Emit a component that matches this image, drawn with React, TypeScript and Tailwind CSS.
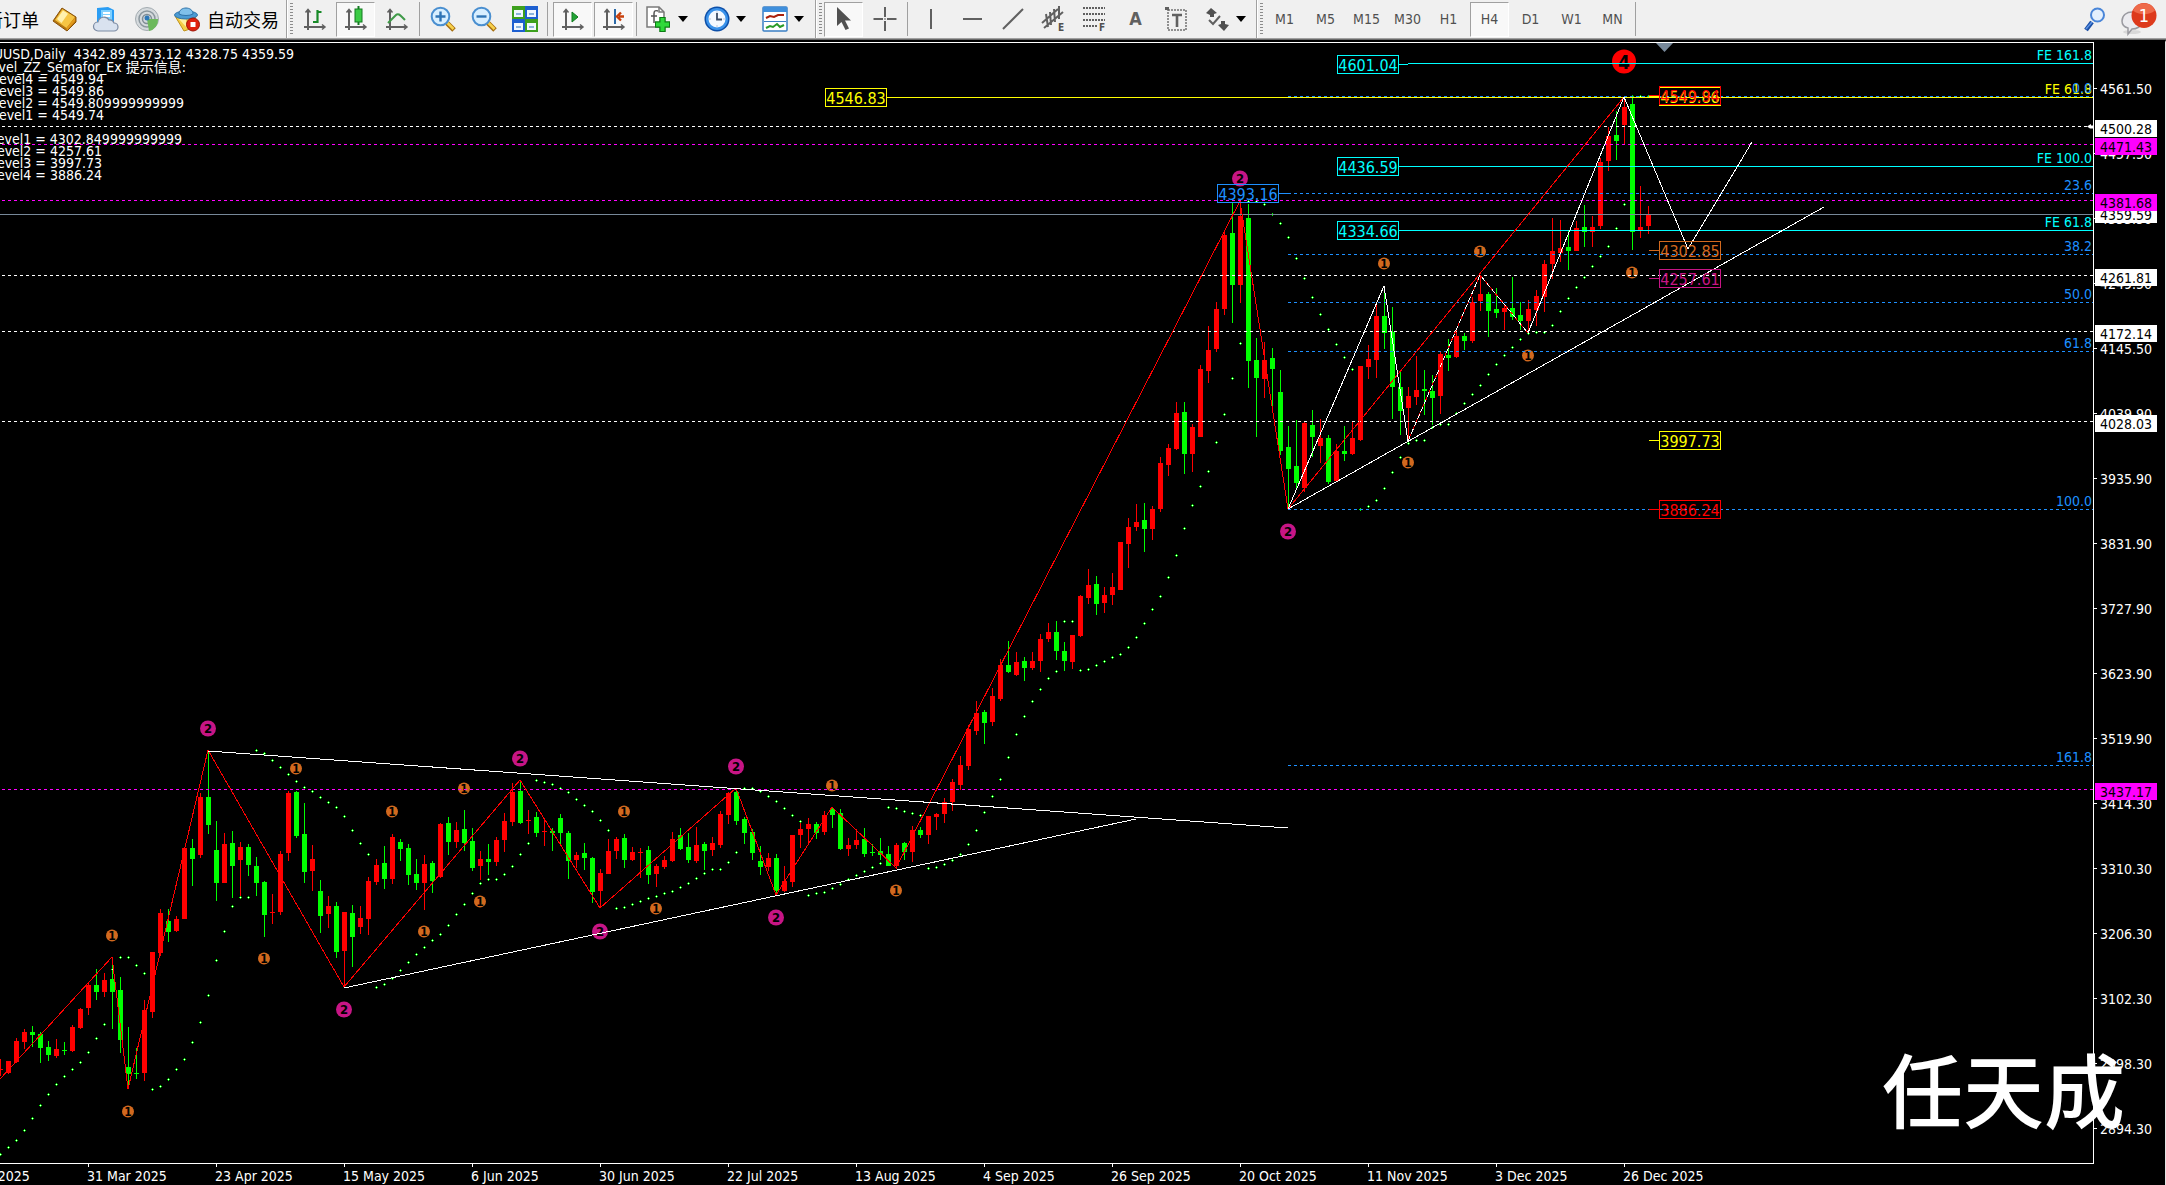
import React from 'react';

type Bar = ['R' | 'G', number, number, number, number];

interface Segment {
    start: number;
    top: number;
    bars: Bar[];
}

interface DotRun {
    start: number;
    top: number;
    ys: number[];
}

// Horizontal distance between two bars, and vertical units per pixel
const STEP = 8;
const UNIT = 3;
// The plot's own origin sits under the toolbar
const PLOT_TOP = 43;

// [colour, high, body top, body bottom, low]
const SEGMENTS: Segment[] = [
    {
        start: 0,
        top: 700,
        bars: [
            ['R', 1077, 1107, 1110, 1127], ['R', 1083, 1083, 1119, 1122], ['R', 1014, 1023, 1086, 1089], ['R', 987, 996, 1026, 1047],
            ['G', 978, 996, 1005, 1041], ['G', 996, 1002, 1044, 1089], ['G', 1023, 1041, 1065, 1083], ['R', 1017, 1047, 1068, 1074],
            ['G', 1026, 1050, 1053, 1065], ['R', 975, 981, 1053, 1056], ['R', 924, 927, 984, 987], ['R', 846, 855, 924, 945],
            ['G', 807, 855, 876, 900], ['R', 819, 840, 876, 891], ['G', 786, 837, 876, 987], ['G', 831, 870, 1020, 1059],
            ['G', 981, 1101, 1122, 1155], ['G', 1044, 1119, 1122, 1137], ['R', 900, 930, 1119, 1143], ['R', 756, 756, 936, 954],
            ['R', 627, 639, 759, 768], ['G', 627, 663, 696, 726], ['R', 648, 657, 693, 696], ['R', 444, 444, 657, 657],
            ['G', 417, 444, 477, 558], ['R', 279, 291, 465, 474], ['G', 153, 291, 375, 402], ['G', 363, 450, 549, 603],
            ['R', 399, 432, 549, 549], ['G', 393, 429, 498, 594], ['R', 426, 441, 480, 588], ['G', 432, 441, 495, 528],
            ['G', 471, 498, 549, 588], ['G', 543, 546, 645, 711], ['R', 582, 636, 639, 672], ['R', 453, 462, 636, 645],
            ['R', 273, 279, 459, 483], ['G', 273, 276, 408, 414], ['G', 309, 402, 516, 549], ['R', 435, 477, 513, 573],
            ['G', 540, 573, 648, 699], ['R', 588, 618, 642, 684], ['G', 606, 618, 756, 774], ['R', 636, 636, 753, 861],
            ['G', 615, 639, 711, 801], ['R', 618, 654, 681, 702], ['R', 531, 543, 657, 705], ['R', 477, 495, 546, 555],
            ['G', 438, 489, 537, 567], ['R', 402, 411, 537, 552], ['G', 417, 426, 447, 483], ['G', 432, 444, 525, 555],
            ['G', 477, 522, 549, 570], ['R', 465, 492, 549, 630], ['G', 483, 489, 543, 579], ['R', 369, 372, 531, 534],
            ['G', 351, 369, 426, 465], ['R', 366, 390, 426, 444], ['G', 330, 387, 429, 453], ['G', 384, 423, 504, 513],
            ['R', 453, 477, 498, 540], ['G', 432, 477, 486, 525], ['R', 411, 420, 486, 498], ['R', 339, 363, 420, 456],
            ['R', 249, 276, 366, 378], ['G', 243, 273, 369, 372], ['R', 330, 360, 363, 402], ['G', 336, 351, 399, 411],
            ['R', 354, 393, 396, 438], ['G', 384, 393, 399, 453], ['G', 342, 354, 399, 438], ['G', 393, 399, 483, 537],
            ['R', 456, 465, 480, 504], ['G', 429, 459, 474, 510], ['G', 471, 474, 576, 609], ['R', 507, 519, 573, 624],
            ['R', 417, 453, 522, 522], ['R', 411, 417, 453, 477], ['G', 402, 414, 480, 504], ['R', 441, 456, 480, 483],
            ['R', 444, 456, 459, 534], ['G', 438, 450, 525, 552], ['R', 492, 498, 522, 561], ['R', 468, 480, 501, 507],
            ['R', 396, 417, 483, 486], ['G', 384, 405, 447, 450], ['G', 399, 441, 480, 489], ['R', 381, 435, 483, 489],
            ['G', 426, 432, 453, 510], ['R', 411, 429, 450, 468], ['R', 333, 342, 435, 444], ['R', 276, 279, 345, 372],
            ['G', 267, 276, 363, 375], ['G', 351, 357, 399, 432], ['G', 387, 396, 459, 480], ['G', 438, 483, 501, 525],
            ['R', 459, 474, 501, 513], ['G', 462, 474, 573, 585], ['R', 498, 543, 573, 576], ['R', 405, 405, 546, 561],
            ['R', 363, 387, 405, 444], ['R', 354, 372, 387, 435], ['G', 366, 372, 399, 417], ['R', 333, 345, 396, 405],
            ['G', 321, 327, 345, 384], ['G', 327, 339, 447, 450], ['R', 414, 435, 447, 468], ['R', 387, 420, 435, 447],
            ['G', 384, 417, 462, 471], ['G', 432, 456, 459, 468], ['G', 414, 453, 465, 480], ['G', 438, 462, 498, 498],
        ],
    },
    {
        start: 112,
        top: 560,
        bars: [
            ['R', 849, 855, 918, 927], ['G', 846, 849, 876, 900], ['R', 798, 810, 876, 906], ['G', 801, 810, 825, 834],
            ['R', 768, 768, 825, 852], ['R', 759, 762, 771, 810], ['R', 714, 726, 762, 789], ['R', 657, 666, 726, 753],
            ['R', 588, 615, 675, 690], ['R', 495, 507, 618, 630], ['R', 423, 459, 513, 525], ['G', 450, 456, 489, 552],
            ['R', 384, 408, 486, 498], ['R', 297, 315, 417, 423], ['G', 243, 315, 336, 339], ['R', 276, 306, 345, 348],
            ['G', 291, 303, 324, 363], ['R', 276, 303, 324, 330], ['R', 222, 237, 303, 336], ['R', 189, 216, 237, 246],
            ['G', 183, 216, 273, 300], ['G', 246, 273, 303, 333], ['R', 225, 225, 306, 327], ['R', 105, 108, 228, 231],
            ['R', 27, 75, 114, 132], ['G', 48, 72, 132, 165], ['R', 81, 105, 129, 159], ['R', 39, 81, 105, 135],
        ],
    },
    {
        start: 140,
        top: 180,
        bars: [
            ['R', 1086, 1086, 1230, 1230], ['R', 1014, 1041, 1092, 1164], ['R', 972, 1026, 1041, 1053], ['G', 969, 1020, 1047, 1116],
            ['R', 978, 987, 1047, 1080], ['R', 831, 849, 987, 996], ['R', 792, 804, 855, 888], ['R', 666, 699, 807, 810],
            ['G', 666, 696, 822, 882], ['R', 732, 741, 822, 876], ['R', 555, 567, 771, 771], ['R', 438, 510, 573, 609],
            ['R', 366, 387, 507, 516], ['R', 156, 165, 387, 405], ['G', 69, 159, 315, 429], ['R', 66, 108, 315, 369],
            ['G', 72, 114, 543, 624], ['G', 474, 540, 594, 771],
        ],
    },
    {
        start: 158,
        top: 40,
        bars: [
            ['R', 906, 960, 1018, 1074], ['G', 924, 954, 987, 1116], ['G', 990, 1056, 1233, 1245], ['G', 1158, 1221, 1287, 1407],
            ['G', 1140, 1278, 1329, 1350], ['R', 1146, 1149, 1344, 1356], ['G', 1110, 1155, 1191, 1251], ['R', 1137, 1194, 1218, 1269],
            ['G', 1185, 1194, 1326, 1332], ['R', 1212, 1233, 1323, 1326], ['G', 1158, 1233, 1242, 1263], ['R', 1146, 1194, 1242, 1245],
            ['R', 978, 978, 1200, 1203], ['R', 915, 957, 981, 1017], ['R', 795, 828, 960, 1014], ['G', 742, 828, 879, 927],
            ['G', 801, 876, 1041, 1137], ['G', 996, 1041, 1113, 1185], ['R', 1041, 1068, 1104, 1197], ['R', 948, 1050, 1071, 1095],
            ['G', 990, 1047, 1053, 1125], ['G', 1005, 1053, 1074, 1155], ['R', 936, 942, 1068, 1122], ['G', 897, 945, 954, 993],
            ['R', 870, 888, 951, 954], ['G', 879, 888, 903, 930], ['R', 771, 786, 903, 909], ['R', 705, 762, 783, 813],
            ['G', 756, 762, 813, 891], ['G', 744, 807, 819, 834], ['R', 792, 804, 816, 870], ['G', 711, 804, 831, 840],
            ['G', 786, 825, 843, 870], ['R', 780, 807, 843, 870], ['R', 750, 768, 810, 858], ['R', 660, 672, 771, 816],
            ['R', 534, 633, 672, 717], ['R', 540, 624, 639, 666], ['G', 573, 621, 633, 690], ['R', 543, 564, 633, 633],
            ['G', 495, 561, 576, 621], ['R', 528, 561, 576, 621], ['R', 354, 366, 558, 567], ['R', 261, 288, 363, 393],
            ['G', 213, 285, 303, 360], ['R', 171, 201, 255, 315], ['G', 165, 192, 576, 630], ['R', 438, 561, 570, 594],
            ['R', 498, 522, 558, 582],
        ],
    },
];

// Parabolic SAR
const SAR: DotRun[] = [
    {
        start: 0,
        top: 700,
        ys: [
            1363, 1342, 1321, 1291, 1255, 1216, 1183, 1153, 1129, 1108, 1087, 1057, 1015, 973, 808,
            772, 772, 796, 820,
            1168, 1159, 1138, 1108, 1078, 1027, 967, 886, 781, 694, 619, 592, 592,
            151, 160, 181, 202, 223, 244, 262, 274, 292, 307, 322, 349, 391, 430, 463,
            862, 853, 835, 811, 787, 763, 742, 721, 703, 676, 643, 613, 580, 550, 538, 538, 523, 499, 463, 430,
            241, 247, 253, 265, 277, 298, 316, 334, 361, 391,
            625, 622, 613, 604, 595, 589, 580, 574, 562, 550, 535, 520, 508, 508, 487, 457,
            265, 265, 274, 289, 304, 325, 346, 364,
            586, 580, 577, 565, 553, 538, 526, 514, 502, 490,
            322, 325, 334, 340, 346,
        ],
    },
    {
        start: 116,
        top: 560,
        ys: [
            925, 922, 913, 901, 883, 853, 811, 757, 709, 658, 592, 523, 469, 424, 388, 355, 334,
            184, 184,
            331, 328, 316, 304, 292, 283, 262, 232, 190, 148, 109, 52,
        ],
    },
    { start: 147, top: 180, ys: [1126, 1045, 976, 919, 874, 787, 703, 595, 490] },
    {
        start: 156,
        top: 40,
        ys: [
            484, 484, 493, 523, 550, 592, 655, 715, 772, 823, 868, 913, 952, 988,
            1408, 1399, 1381, 1345, 1297, 1252,
            1210, 1201, 1201, 1162, 1153, 1153, 1120, 1090, 1063, 1036, 1003, 973, 946, 922, 898, 880, 877, 877,
            856, 814, 775, 742, 712, 679, 649, 619, 565, 493,
            169, 169, 169,
        ],
    },
];

const DASHED_LEVELS = [
    { y: 126, color: '#ffffff' },
    { y: 144, color: '#ff00ff' },
    { y: 200, color: '#ff00ff' },
    { y: 275, color: '#ffffff' },
    { y: 331, color: '#ffffff' },
    { y: 421, color: '#ffffff' },
    { y: 789, color: '#ff00ff' },
];

const FIBO = [
    { y: 96, label: '0.0' },
    { y: 193, label: '23.6' },
    { y: 254, label: '38.2' },
    { y: 302, label: '50.0' },
    { y: 351, label: '61.8' },
    { y: 509, label: '100.0' },
    { y: 765, label: '161.8' },
];

const EXPANSION = [
    { x: 1408, y: 63, label: 'FE 161.8', color: '#00ffff' },
    { x: 1398, y: 166, label: 'FE 100.0', color: '#00ffff' },
    { x: 1398, y: 230, label: 'FE 61.8', color: '#00ffff' },
    { x: 887, y: 97, label: 'FE 61.8', color: '#ffff00' },
];

const PRICE_BOXES = [
    { x: 825, y: 88, text: '4546.83', color: '#ffff00', side: 'none' },
    { x: 1337, y: 55, text: '4601.04', color: '#00ffff', side: 'right' },
    { x: 1337, y: 157, text: '4436.59', color: '#00ffff', side: 'none' },
    { x: 1337, y: 221, text: '4334.66', color: '#00ffff', side: 'none' },
    { x: 1217, y: 184, text: '4393.16', color: '#1e90ff', side: 'right' },
    { x: 1659, y: 87, text: '4549.86', color: '#ffff00', side: 'left' },
    { x: 1659, y: 86, text: '4549.94', color: '#ff0000', side: 'left' },
    { x: 1659, y: 241, text: '4302.85', color: '#d2691e', side: 'left' },
    { x: 1659, y: 269, text: '4257.61', color: '#c71585', side: 'left' },
    { x: 1659, y: 431, text: '3997.73', color: '#ffff00', side: 'left' },
    { x: 1659, y: 500, text: '3886.24', color: '#ff0000', side: 'left' },
];

const MARKERS: { level: 1 | 2 | 4; points: [number, number][] }[] = [
    {
        level: 1,
        points: [
            [112, 935], [128, 1111], [264, 958], [296, 768], [392, 811], [424, 931], [464, 788], [480, 901], [624, 811],
            [656, 908], [832, 785], [896, 890], [1384, 263], [1480, 251], [1528, 355], [1408, 462], [1632, 272],
        ],
    },
    {
        level: 2,
        points: [[208, 728], [344, 1009], [520, 758], [736, 766], [600, 931], [776, 917], [1240, 178], [1288, 531]],
    },
    { level: 4, points: [[1624, 61]] },
];

const MARKER_STYLE = {
    1: { r: 6, fill: '#d2691e', size: 12 },
    2: { r: 8, fill: '#c71585', size: 13 },
    4: { r: 12, fill: '#ff0000', size: 19 },
};

const COMMENTS = [
    { x: 294, y: 59, text: 'XAUUSD,Daily  4342.89 4373.12 4328.75 4359.59' },
    { x: 186, y: 72, text: '3_Level_ZZ_Semafor_Ex 提示信息:' },
    { x: 104, y: 84, text: 'Level4 = 4549.94' },
    { x: 104, y: 96, text: 'Level3 = 4549.86' },
    { x: 184, y: 108, text: 'Level2 = 4549.809999999999' },
    { x: 104, y: 120, text: 'Level1 = 4549.74' },
    { x: 182, y: 144, text: 'Level1 = 4302.849999999999' },
    { x: 102, y: 156, text: 'Level2 = 4257.61' },
    { x: 102, y: 168, text: 'Level3 = 3997.73' },
    { x: 102, y: 180, text: 'Level4 = 3886.24' },
];

const PRICES = [
    '4561.50', '4457.50', '4353.50', '4249.50', '4145.50', '4039.90', '3935.90', '3831.90', '3727.90',
    '3623.90', '3519.90', '3414.30', '3310.30', '3206.30', '3102.30', '2998.30', '2894.30',
];

const PRICE_TAGS = [
    { top: 166, text: '4359.59', magenta: false },
    { top: 80, text: '4500.28', magenta: false },
    { top: 98, text: '4471.43', magenta: true },
    { top: 154, text: '4381.68', magenta: true },
    { top: 229, text: '4261.81', magenta: false },
    { top: 285, text: '4172.14', magenta: false },
    { top: 375, text: '4028.03', magenta: false },
    { top: 743, text: '3437.17', magenta: true },
];

const DATES = [
    '31 Mar 2025', '23 Apr 2025', '15 May 2025', '6 Jun 2025', '30 Jun 2025', '22 Jul 2025', '13 Aug 2025',
    '4 Sep 2025', '26 Sep 2025', '20 Oct 2025', '11 Nov 2025', '3 Dec 2025', '26 Dec 2025',
];

const TIMEFRAMES = ['M1', 'M5', 'M15', 'M30', 'H1', 'H4', 'D1', 'W1', 'MN'];

/* ---------- toolbar icons ---------- */

const Icon = ({ children }: { children: React.ReactNode }) => (
    <svg width="26" height="26" viewBox="0 0 26 26" fill="none" className="shrink-0 overflow-visible">
        {children}
    </svg>
);

const Axes = () => (
    <g stroke="#606060" strokeWidth="2">
        <path d="M6 4v20M2 21h20" />
        <path d="M3.500 6.500L6 3.500l2.500 3M20 18.500l3 2.500-3 2.500" strokeWidth="1.500" />
    </g>
);

const GoldIcon = () => (
    <Icon>
        <path d="M1 15L10 2l14 9v5L15 25z" fill="#b5760f" />
        <path d="M3 14L10.500 3 23 11 14.500 22z" fill="#f6c544" />
        <path d="M5 13L11 4.500l5 3.300L9.500 17z" fill="#fff0ae" />
        <path d="M14.500 22L23 11.500V15l-8 9.500z" fill="#e39a1c" />
        <path d="M1 15L10 2l14 9v5L15 25z" stroke="#8a5208" />
    </Icon>
);

const CloudIcon = () => (
    <Icon>
        <path d="M4 2l11-1 6 3v12H4z" fill="#2a9df4" />
        <path d="M8 4h11v12H8z" fill="#7fd0ff" />
        <path d="M10 7h7M10 10h7" stroke="#fff" strokeWidth="2" />
        <path d="M5 25a4.500 4.500 0 010-9 6 6 0 0111-2 4.500 4.500 0 015 3 4 4 0 010 8z" fill="#d9e2ef" stroke="#7c8ba3" strokeWidth="1.200" />
    </Icon>
);

const RadarIcon = () => (
    <Icon>
        <circle cx="13" cy="13" r="11.500" fill="#d5dadd" stroke="#a3abb0" />
        <circle cx="13" cy="13" r="8" stroke="#8b979e" strokeWidth="1.500" />
        <circle cx="13" cy="13" r="4.500" stroke="#7f8d96" strokeWidth="1.500" />
        <path d="M13 13l11 0a11 11 0 01-9 12z" fill="#6cb95c" />
        <circle cx="13" cy="12" r="2.500" fill="#2d78b8" />
    </Icon>
);

const ExpertIcon = () => (
    <Icon>
        <path d="M1 10h21l-6 13-6 2z" fill="#f5cf45" stroke="#c0921a" />
        <path d="M5 13h7l1 9z" fill="#fff0a0" />
        <ellipse cx="12" cy="9" rx="11.500" ry="4" fill="#4b9bd3" stroke="#2d72a8" />
        <path d="M5 8c0-8 14-8 14 0-3 2-11 2-14 0z" fill="#7fc0ea" stroke="#2d72a8" />
        <circle cx="19" cy="18.500" r="6.500" fill="#e0220d" stroke="#9e1507" />
        <rect x="16.500" y="16" width="5" height="5" fill="#fff" />
    </Icon>
);

const BarsIcon = () => (
    <Icon>
        <Axes />
        <path d="M15.500 4v13M15.500 6h4M11 16h4.500" stroke="#188a28" strokeWidth="2.200" />
    </Icon>
);

const CandlesIcon = () => (
    <Icon>
        <Axes />
        <path d="M15.500 0v19" stroke="#127a20" strokeWidth="2" />
        <rect x="12" y="3" width="7" height="13" fill="#3ccb46" stroke="#127a20" />
    </Icon>
);

const LineIcon = () => (
    <Icon>
        <Axes />
        <path d="M4 17l8-8c2-2 4 0 6 2l3 3" stroke="#3f9a48" strokeWidth="2" />
    </Icon>
);

const ZoomIcon = ({ plus }: { plus?: boolean }) => (
    <Icon>
        <path d="M17 17l7 7" stroke="#a87010" strokeWidth="5" />
        <path d="M17 16.500l6.500 6.500" stroke="#f8d24c" strokeWidth="2.500" />
        <circle cx="10.500" cy="10.500" r="8.800" fill="#d8efff" stroke="#4a8fd0" strokeWidth="2" />
        <path d={plus ? 'M10.500 5.500v10M5.500 10.500h10' : 'M5.500 10.500h10'} stroke="#2f74b5" strokeWidth="2.400" />
    </Icon>
);

const TilesIcon = () => (
    <Icon>
        <rect x="0" y="0" width="13" height="13" fill="#3da01e" />
        <rect x="13" y="0" width="13" height="13" fill="#1d5fd0" />
        <rect x="0" y="13" width="13" height="13" fill="#1d5fd0" />
        <rect x="13" y="13" width="13" height="13" fill="#3da01e" />
        <path d="M2 4h9v7H2zM15 4h9v7h-9zM2 17h9v7H2zM15 17h9v7h-9z" fill="#f2f8ff" />
        <path d="M4 8h5M17 8h5M4 21h5M17 21h5" stroke="#8cb4dc" strokeWidth="2" />
    </Icon>
);

const ScrollIcon = () => (
    <Icon>
        <Axes />
        <path d="M12 6v10l6-5z" fill="#22a535" stroke="#127a20" />
    </Icon>
);

const ShiftIcon = () => (
    <Icon>
        <Axes />
        <path d="M14 3v15" stroke="#2c6aa8" strokeWidth="2" />
        <path d="M23 10.500h-5M20 6.500l-4 4 4 4" stroke="#c8400c" strokeWidth="2.400" />
    </Icon>
);

const IndicatorIcon = () => (
    <Icon>
        <path d="M1 1h12l5 5v15H1z" fill="#fff" stroke="#7a7a7a" strokeWidth="1.500" />
        <path d="M13 1v5h5" stroke="#7a7a7a" strokeWidth="1.500" />
        <path d="M12 5c-3-1-4 0-4 3v9M5 10h6" stroke="#555" strokeWidth="1.500" />
        <path d="M16.500 11v15M9 18.500h15" stroke="#0c7d14" strokeWidth="6.500" />
        <path d="M16.500 12v13M10 18.500h13" stroke="#2fd93a" strokeWidth="4" />
    </Icon>
);

const ClockIcon = () => (
    <Icon>
        <circle cx="13" cy="13" r="12.500" fill="#0d4fa8" />
        <circle cx="13" cy="13" r="11" fill="#3a92ea" />
        <circle cx="13" cy="13" r="8.500" fill="#f4f9ff" />
        <path d="M13 7v6.500h5" stroke="#3c4d66" strokeWidth="1.800" />
        <path d="M13 5.500v1M13 19.500v1M5.500 13h1M19.500 13h1" stroke="#8a9bb0" />
    </Icon>
);

const TemplateIcon = () => (
    <Icon>
        <rect x="1" y="1" width="24" height="24" rx="1" fill="#fff" stroke="#3a7fc4" strokeWidth="1.500" />
        <rect x="1" y="1" width="24" height="5" fill="#3f8fdc" />
        <path d="M2 15.500h22" stroke="#3a7fc4" />
        <path d="M4 12l4-2 4 1 4-2h6" stroke="#a8200c" strokeWidth="2" />
        <path d="M4 22l4-2 3 1 4-3 3 3 4-2" stroke="#2a9a2a" strokeWidth="2" />
    </Icon>
);

const CursorIcon = () => (
    <Icon>
        <path d="M6 1v19l4.500-4 4 8 3.500-1.500-4-8h6z" fill="#505050" />
    </Icon>
);

const CrossIcon = () => (
    <Icon>
        <path d="M13 1v10M13 15v10M1.500 13h9.500M15 13h9.500M12.500 13h1" stroke="#606060" strokeWidth="2" />
    </Icon>
);

const ChannelIcon = () => (
    <Icon>
        <path d="M1 17L17 3M3 22L22 6M5 8l2 13M9 6l1 13M13 3l1 13M18 0v13" stroke="#606060" strokeWidth="2" />
        <text x="17" y="25" fontSize="10" fontWeight="700" fill="#505050">E</text>
    </Icon>
);

const FiboIcon = () => (
    <Icon>
        <path d="M1 2h22M1 8h22M1 14h22M1 20h14" stroke="#606060" strokeWidth="2" strokeDasharray="2 1" />
        <text x="17" y="25" fontSize="10" fontWeight="700" fill="#505050">F</text>
    </Icon>
);

const LabelIcon = () => (
    <Icon>
        <rect x="4" y="4" width="18" height="20" stroke="#707070" strokeWidth="1.500" strokeDasharray="2 1" />
        <path d="M8 9h10M13 9v12" stroke="#606060" strokeWidth="2.600" />
        <path d="M1 1h4v3H1z" fill="#606060" />
    </Icon>
);

const ArrowsIcon = () => (
    <Icon>
        <path d="M7 2l6 5-3 1v3H6V9L2 7zM20 25l-6-6 3-1v-3h4v3l4 1z" fill="#505050" />
        <path d="M5 14l4 4 7-8" stroke="#606060" strokeWidth="2" />
    </Icon>
);

const SearchIcon = () => (
    <Icon>
        <path d="M10 16l-6 8" stroke="#1b4fa6" strokeWidth="4.500" />
        <path d="M10 16l-6 7" stroke="#5b93e4" strokeWidth="1.500" />
        <circle cx="15.500" cy="9" r="6.500" fill="#e4f0fd" stroke="#4a86d8" strokeWidth="2" />
    </Icon>
);

const ChatIcon = () => (
    <svg width="38" height="36" viewBox="0 0 38 36" fill="none">
        <ellipse cx="12" cy="31" rx="9" ry="2" fill="#d8d8d8" />
        <path d="M2 20c0-12 20-12 20 0 0 6-6 8-10 8l-4 5v-6c-4-1-6-4-6-7z" fill="#ececf0" stroke="#9a9aa0" strokeWidth="1.500" />
        <circle cx="24" cy="14.500" r="12.500" fill="#dd3a1c" />
        <path d="M13 9.500a12 12 0 0122 0c-6 5-16 5-22 0z" fill="#ee6a4a" />
        <text x="24" y="21" fontSize="18" fill="#fff" textAnchor="middle">1</text>
    </svg>
);

/* ---------- toolbar parts ---------- */

const ToolButton = ({ label, pressed, children }: { label: string; pressed?: boolean; children: React.ReactNode }) => (
    <button
        type="button"
        aria-label={label}
        aria-pressed={pressed}
        className={
            pressed
                ? 'flex h-[35px] w-[39px] shrink-0 items-center justify-center border border-[#a0a0a0] border-r-white border-b-white bg-[#f8f8f8]'
                : 'flex h-[35px] w-[39px] shrink-0 items-center justify-center'
        }
    >
        {children}
    </button>
);

const Caret = () => (
    <svg width="10" height="6" viewBox="0 0 10 6" className="shrink-0">
        <path d="M0 0h10L5 6z" fill="#000" />
    </svg>
);

const DropButton = ({ label, children }: { label: string; children: React.ReactNode }) => (
    <button type="button" aria-label={label} className="flex h-[35px] w-14 shrink-0 items-center pl-[6px]">
        {children}
        <span className="pl-[6px]">
            <Caret />
        </span>
    </button>
);

const Separator = () => <span className="mx-[3px] h-[34px] w-px shrink-0 bg-[#a0a0a0]" />;

const Gripper = () => (
    <>
        <span className="h-[38px] w-[2px] shrink-0 border-l border-[#a0a0a0] bg-white" />
        <span className="mx-[2px] h-[32px] w-[3px] shrink-0 bg-[repeating-linear-gradient(to_bottom,#8c8c8c_0_1px,#f0f0f0_1px_3px)]" />
    </>
);

const Toolbar = () => (
    <header className="flex h-10 shrink-0 items-center overflow-hidden border-b border-[#696969] bg-[#f0f0f0] pb-px shadow-[inset_0_-1px_0_#a0a0a0]">
        <button type="button" className="-ml-[15px] mr-[6px] shrink-0 font-['Noto_Sans_CJK_SC',sans-serif] text-[18px] leading-6 text-black">
            新订单
        </button>
        <div className="flex shrink-0 gap-[2px]">
            <ToolButton label="MetaEditor"><GoldIcon /></ToolButton>
            <ToolButton label="VPS"><CloudIcon /></ToolButton>
            <ToolButton label="Signals"><RadarIcon /></ToolButton>
            <button type="button" className="mr-[7px] flex h-[35px] shrink-0 items-center gap-[7px] pl-[6px] font-['Noto_Sans_CJK_SC',sans-serif] text-[18px] leading-6 text-black">
                <ExpertIcon />
                自动交易
            </button>
        </div>
        <Gripper />
        <div className="flex shrink-0 gap-[2px]">
            <ToolButton label="Bar chart"><BarsIcon /></ToolButton>
            <ToolButton label="Candlesticks" pressed><CandlesIcon /></ToolButton>
            <ToolButton label="Line chart"><LineIcon /></ToolButton>
        </div>
        <Separator />
        <div className="flex shrink-0 gap-[2px]">
            <ToolButton label="Zoom in"><ZoomIcon plus /></ToolButton>
            <ToolButton label="Zoom out"><ZoomIcon /></ToolButton>
            <ToolButton label="Tile windows"><TilesIcon /></ToolButton>
        </div>
        <Separator />
        <div className="flex shrink-0 gap-[2px] pl-[2px]">
            <ToolButton label="Auto scroll" pressed><ScrollIcon /></ToolButton>
            <ToolButton label="Chart shift" pressed><ShiftIcon /></ToolButton>
        </div>
        <Separator />
        <div className="mr-[3px] flex shrink-0 gap-[2px]">
            <DropButton label="Indicators"><IndicatorIcon /></DropButton>
            <DropButton label="Periods"><ClockIcon /></DropButton>
            <DropButton label="Templates"><TemplateIcon /></DropButton>
        </div>
        <Gripper />
        <div className="flex shrink-0 gap-[2px]">
            <ToolButton label="Cursor" pressed><CursorIcon /></ToolButton>
            <ToolButton label="Crosshair"><CrossIcon /></ToolButton>
        </div>
        <Separator />
        <div className="mr-[2px] flex shrink-0 gap-[2px]">
            <ToolButton label="Vertical line"><Icon><path d="M13 3v20" stroke="#606060" strokeWidth="2" /></Icon></ToolButton>
            <ToolButton label="Horizontal line"><Icon><path d="M4 13h19" stroke="#606060" strokeWidth="2" /></Icon></ToolButton>
            <ToolButton label="Trendline"><Icon><path d="M3 23L23 3" stroke="#606060" strokeWidth="2" /></Icon></ToolButton>
            <ToolButton label="Channel"><ChannelIcon /></ToolButton>
            <ToolButton label="Fibonacci"><FiboIcon /></ToolButton>
            <ToolButton label="Text">
                <span className="text-lg leading-6 font-bold text-[#606060]">A</span>
            </ToolButton>
            <ToolButton label="Text label"><LabelIcon /></ToolButton>
            <DropButton label="Arrows"><ArrowsIcon /></DropButton>
        </div>
        <Gripper />
        <div className="flex shrink-0 gap-[2px]">
            {TIMEFRAMES.map((tf) => (
                <ToolButton key={tf} label={tf} pressed={tf === 'H4'}>
                    <span className="text-sm leading-5 text-[#505050]">{tf}</span>
                </ToolButton>
            ))}
        </div>
        <Separator />
        <div className="ml-auto flex shrink-0 items-center gap-[6px] pr-[8px]">
            <ToolButton label="Search"><SearchIcon /></ToolButton>
            <button type="button" aria-label="Notifications"><ChatIcon /></button>
        </div>
    </header>
);

/* ---------- chart ---------- */

const Candle = ({ index, top, bar }: { index: number; top: number; bar: Bar }) => {
    const [kind, ...values] = bar;
    const [high, open, close, low] = values.map((v) => top + Math.round(v / UNIT));
    const x = index * STEP;
    return (
        <g fill={kind === 'R' ? '#ff0000' : '#00ff00'}>
            <rect x={x} y={high} width="1" height={Math.max(low - high, 1)} />
            <rect x={x - 2} y={open} width="5" height={Math.max(close - open, 1)} />
        </g>
    );
};

const SarDot = ({ index, y }: { index: number; y: number }) => (
    <>
        <path d={`M${index * STEP - 1} ${y}h3v1h-3zM${index * STEP} ${y - 1}h1v3h-1z`} fill="#00ff00" />
        <rect x={index * STEP} y={y} width="1" height="1" fill="#ffffff" />
    </>
);

const Plot = () => (
    <svg width="100%" height="100%" className="block" role="img" aria-label="XAUUSD, Daily">
        <g transform={`translate(0 ${-PLOT_TOP})`}>
            <g shapeRendering="crispEdges">
                {SEGMENTS.map((seg) =>
                    seg.bars.map((bar, i) => <Candle key={seg.start + i} index={seg.start + i} top={seg.top} bar={bar} />)
                )}
                {SAR.map((run) =>
                    run.ys.map((v, i) => <SarDot key={run.start + i} index={run.start + i} y={run.top + Math.floor(v / UNIT)} />)
                )}
            </g>

            {/* Semaphore markers */}
            {MARKERS.map(({ level, points }) => {
                const { r, fill, size } = MARKER_STYLE[level];
                return points.map(([x, y]) => (
                    <g key={`${x}-${y}`}>
                        <circle cx={x} cy={y + 0.5} r={r} fill={fill} />
                        <text x={x} y={y + size * 0.4} fontSize={size} fontWeight="700" textAnchor="middle" fill="#000">{level}</text>
                    </g>
                ));
            })}

            {/* Levels and trend lines */}
            <g shapeRendering="crispEdges" fill="none">
                {DASHED_LEVELS.map((l) => (
                    <line key={l.y} x1="2" x2="100%" y1={l.y + 0.5} y2={l.y + 0.5} stroke={l.color} strokeDasharray="3 3" />
                ))}
                <line x1="0" x2="100%" y1="214.500" y2="214.500" stroke="#778899" />
                {EXPANSION.map((l) => (
                    <line key={l.y} x1={l.x} x2="100%" y1={l.y + 0.5} y2={l.y + 0.5} stroke={l.color} />
                ))}
                {FIBO.map((l) => (
                    <line key={l.y} x1="1288" x2="100%" y1={l.y + 0.5} y2={l.y + 0.5} stroke="#1e90ff" strokeDasharray="3 3" />
                ))}
                <polyline
                    points="0,1079 112,957 128,1089 208,750 344,987 520,780 600,908 736,788 776,895 832,807 896,868 1240,201 1288,509 1624,97"
                    stroke="#ff0000"
                />
                <polyline points="1408,441 1480,275 1528,333" stroke="#ff0000" />
                <polyline points="1408,441 1480,275 1528,333" stroke="#ffffff" strokeDasharray="5 3" />
                <polyline points="1288,509 1384,286 1408,441" stroke="#ffffff" />
                <polyline points="1528,333 1624,97 1688,249 1752,142" stroke="#ffffff" />
                <line x1="1288" y1="509" x2="1824" y2="207" stroke="#ffffff" />
                <line x1="208" y1="751" x2="1288" y2="828" stroke="#ffffff" />
                <line x1="344" y1="988" x2="1136" y2="819" stroke="#ffffff" />
            </g>

            <path d="M1656 43h17l-8.500 9z" fill="#778899" />

            {/* Price boxes */}
            {PRICE_BOXES.map((b) => (
                <g key={b.text}>
                    <rect x={b.x + 0.5} y={b.y + 0.5} width="61" height="18" fill="none" stroke={b.color} />
                    {b.side === 'left' && <path d={`M${b.x - 10} ${b.y + 9.5}h10`} stroke={b.color} />}
                    {b.side === 'right' && <path d={`M${b.x + 61} ${b.y + 9.5}h10`} stroke={b.color} />}
                    <text x={b.x + 31} y={b.y + 16} fontSize="16" textAnchor="middle" fill={b.color}>{b.text}</text>
                </g>
            ))}

            <g fontSize="14" textAnchor="end">
                {EXPANSION.map((l) => (
                    <text key={l.y} x="100%" dx="-1" y={l.y - 3} fill={l.color}>{l.label}</text>
                ))}
                {FIBO.map((l) => (
                    <text key={l.y} x="100%" dx="-1" y={l.y - 3} fill="#1e90ff">{l.label}</text>
                ))}
                {COMMENTS.map((c) => (
                    <text key={c.y} x={c.x} y={c.y} fill="#ffffff" className="whitespace-pre">{c.text}</text>
                ))}
            </g>

            {/* Alert arrow at the right edge */}
            <svg x="100%" y="124" width="6" height="6" overflow="visible">
                <path d="M-6 2.500L-2 0v1.500h2v3h-2l-1 0z" fill="#ffffff" />
            </svg>
        </g>
    </svg>
);

const TimeAxis = () => (
    <div className="flex h-[21px] shrink-0 overflow-hidden text-sm leading-[18px] text-white">
        <span className="-ml-[42px] w-[129px] shrink-0 pt-[3px] whitespace-nowrap">7 Mar 2025</span>
        {DATES.map((date) => (
            <div key={date} className="w-32 shrink-0">
                <div className="ml-px h-[3px] w-px bg-white" />
                <span className="block whitespace-nowrap">{date}</span>
            </div>
        ))}
    </div>
);

const PriceAxis = () => (
    <aside className="relative w-[71px] shrink-0 overflow-hidden pt-[14px] text-sm leading-[19px]">
        {PRICES.map((price) => (
            <div key={price} className="flex h-[65px] items-center gap-[3px] text-white">
                <span className="h-px w-[3px] bg-white" />
                <span className="pt-[2px]">{price}</span>
            </div>
        ))}
        {PRICE_TAGS.map((tag) => (
            <span
                key={tag.text}
                style={{ top: tag.top - 2 }}
                className={
                    tag.magenta
                        ? 'absolute left-px h-[17px] w-[62px] bg-[#ff00ff] pl-[5px] text-black'
                        : 'absolute left-px h-[17px] w-[62px] bg-white pl-[5px] text-black'
                }
            >
                {tag.text}
            </span>
        ))}
    </aside>
);

export default function App() {
    return (
        <div className="flex h-screen flex-col overflow-hidden bg-black font-['DejaVu_Sans_Condensed','Noto_Sans','Noto_Sans_CJK_SC',sans-serif]">
            <Toolbar />
            <main className="relative flex min-h-0 flex-1 border-t-2 border-r border-t-black border-r-[#e3e3e3]">
                <div className="flex min-w-0 flex-1 flex-col">
                    <div className="min-h-0 flex-1 border-y border-r border-white">
                        <Plot />
                    </div>
                    <TimeAxis />
                </div>
                <PriceAxis />
                <div className="absolute right-10 bottom-10 font-['Noto_Sans_CJK_SC',sans-serif] text-[81px] leading-[116px] font-medium text-white">
                    任天成
                </div>
            </main>
        </div>
    );
}
